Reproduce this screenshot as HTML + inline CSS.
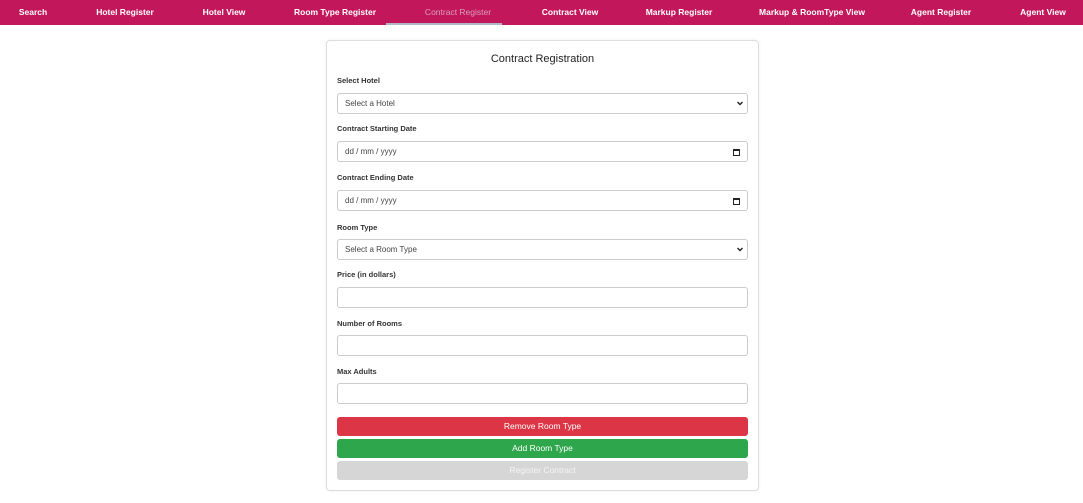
<!DOCTYPE html>
<html><head><style>
body{margin:0;width:1083px;height:503px;background:#fff;font-family:"Liberation Sans",sans-serif;position:relative;overflow:hidden}
.nav{position:absolute;left:0;top:0;width:1083px;height:25px;background:#c2185b}
.nav span{position:absolute;top:7px;font-size:8.5px;font-weight:bold;color:#fff;transform:translateX(-50%);white-space:nowrap}
.nav .act{color:#d9a0b8;font-weight:normal}
.ul{position:absolute;left:386px;top:23px;width:116px;height:2px;background:#b0b8c8}
.card{position:absolute;left:326px;top:40px;width:431px;height:449px;border:1px solid #ddd;border-radius:4px;box-shadow:0 0 3px rgba(0,0,0,.08)}
h1{position:absolute;left:326px;top:53px;width:433px;margin:0;text-align:center;font-size:11px;font-weight:normal;color:#222}
.lb{position:absolute;left:337px;font-size:7.5px;font-weight:bold;color:#333}
.in{position:absolute;left:337px;width:409px;height:19px;border:1px solid #ccc;border-radius:3px;font-size:8px;color:#444;box-sizing:content-box}
.in span{position:absolute;left:7px;top:5px}
.chev{position:absolute;right:3px;top:6px}
.cal{position:absolute;right:7px;top:7px;width:5px;height:4px;border:1px solid #222;border-top-width:2px}
.btn{position:absolute;left:337px;width:411px;height:19px;border-radius:3px;color:#fff;font-size:8.5px;text-align:center;line-height:19px}
</style></head><body>
<div class="nav">
<span style="left:33px">Search</span>
<span style="left:125px">Hotel Register</span>
<span style="left:224px">Hotel View</span>
<span style="left:335px">Room Type Register</span>
<span class="act" style="left:458px">Contract Register</span>
<span style="left:570px">Contract View</span>
<span style="left:679px">Markup Register</span>
<span style="left:812px">Markup &amp; RoomType View</span>
<span style="left:941px">Agent Register</span>
<span style="left:1043px">Agent View</span>
<div class="ul"></div>
</div>
<div class="card"></div>
<h1>Contract Registration</h1>
<div class="lb" style="top:76px">Select Hotel</div>
<div class="in" style="top:93px"><span>Select a Hotel</span><svg class="chev" width="8" height="7" viewBox="0 0 8 7"><path d="M1.5 2l2.5 2.5L6.5 2" fill="none" stroke="#222" stroke-width="1.4"/></svg></div>
<div class="lb" style="top:124px">Contract Starting Date</div>
<div class="in" style="top:141px"><span>dd / mm / yyyy</span><div class="cal"></div></div>
<div class="lb" style="top:173px">Contract Ending Date</div>
<div class="in" style="top:190px"><span>dd / mm / yyyy</span><div class="cal"></div></div>
<div class="lb" style="top:223px">Room Type</div>
<div class="in" style="top:239px"><span>Select a Room Type</span><svg class="chev" width="8" height="7" viewBox="0 0 8 7"><path d="M1.5 2l2.5 2.5L6.5 2" fill="none" stroke="#222" stroke-width="1.4"/></svg></div>
<div class="lb" style="top:270px">Price (in dollars)</div>
<div class="in" style="top:287px"></div>
<div class="lb" style="top:319px">Number of Rooms</div>
<div class="in" style="top:335px"></div>
<div class="lb" style="top:367px">Max Adults</div>
<div class="in" style="top:383px"></div>
<div class="btn" style="top:417px;background:#dc3545">Remove Room Type</div>
<div class="btn" style="top:439px;background:#2ea64b">Add Room Type</div>
<div class="btn" style="top:461px;background:#d6d6d6;color:#f4f4f4">Register Contract</div>
</body></html>
